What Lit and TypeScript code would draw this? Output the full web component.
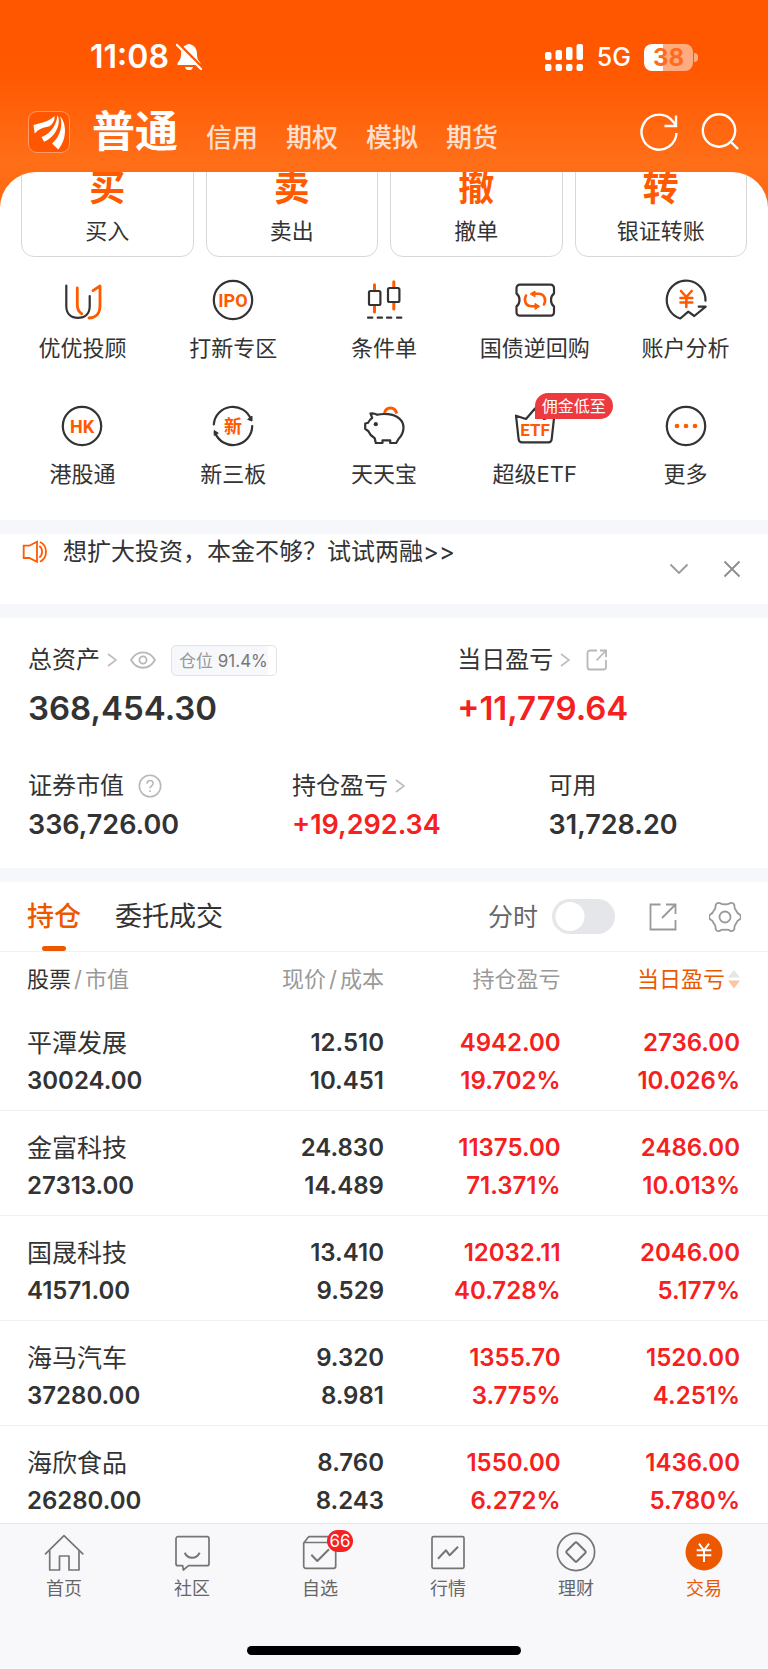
import { LitElement, html, svg, css, nothing, TemplateResult } from "lit";
import { customElement, property, state } from "lit/decorators.js";
import { classMap } from "lit/directives/class-map.js";

const DARK = "#333333";
const ORANGE = "#ff5a00";

type Glyph = TemplateResult;

const serviceIcons: Record<string, Glyph> = {
  advisor: svg`
    <path d="M6.3 7.7V28c0 8 5 11.8 11.7 11.8S29.7 36 29.7 28V18" stroke=${DARK} />
    <path d="M17.3 10V27c0 4 1.700 7 4.400 8.700" stroke=${ORANGE} stroke-width="2.800" />
    <path d="M33 12.700 40 8V28c0 7.500-4.500 11.800-11 12" stroke=${ORANGE} stroke-width="2.800" />`,
  ipo: svg`
    <circle cx="22" cy="22" r="19.200" stroke=${DARK} />
    <text x="22" y="28.500" class="word">IPO</text>`,
  candles: svg`
    <path d="M12.500 6.700v6M12.500 28v6M31.800 3.700v6M31.800 25v6" stroke=${ORANGE} stroke-width="3" />
    <rect x="7" y="13" width="11.400" height="14" rx="1.500" stroke=${DARK} />
    <rect x="26" y="10" width="11.400" height="14" rx="1.500" stroke=${DARK} />
    <path d="M6 39.700h4.300M15.700 39.700h4.300M25 39.700h4.300M35 39.700h4.300" stroke=${DARK} />`,
  repo: svg`
    <path d="M7 6.700H37.500A3.300 3.300 0 0 1 41 10V15.500C37 18.500 37 25.500 41 28.500V34.500A3.300 3.300 0 0 1 37.500 37.700H7A3.300 3.300 0 0 1 3.500 34.500V28.500C7.500 25.500 7.500 18.500 3.500 15.500V10A3.300 3.300 0 0 1 7 6.700Z" stroke=${DARK} />
    <path d="M20 15.800h5.500c6 0 8 6 5.500 10.700M24 28.200h-5.500c-6 0-8-6-5.500-10.700" stroke=${ORANGE} stroke-width="2.600" />
    <path d="M17.500 15.800 22 13v5.600ZM26.500 28.200 22 25.400v5.600Z" fill=${ORANGE} stroke=${ORANGE} stroke-width="1" />`,
  analysis: svg`
    <path d="M41.500 22.700A19.400 19.400 0 1 0 16.300 40.500L24.300 33.700 30.300 38 41.700 28.700H34.700" stroke=${DARK} />
    <path d="M17 13 22.300 19 27.700 13M22.300 19V29M16.500 20h11.800M16.500 24.500h11.800" stroke=${ORANGE} stroke-width="2.600" />`,
  hk: svg`
    <circle cx="22" cy="22" r="19.200" stroke=${DARK} />
    <text x="22" y="28.500" class="word">HK</text>`,
  neeq: svg`
    <path d="M2.800 20.500A19.200 19.200 0 0 1 40 15.500M41.200 22A19.200 19.200 0 0 1 4 28.500" stroke=${DARK} />
    <path d="M41 12.500V17L37 15.500ZM3.200 31V26.500L7 29Z" fill=${DARK} stroke=${DARK} stroke-width="1" />
    <text x="22" y="28.500" class="han">新</text>`,
  piggy: svg`
    <path d="M15.200 10.800C19 9.800 22 9.800 26 10.200 35 11 41.500 16 41.500 23.500 41.500 29 38.500 33 36.500 35L34.200 39H28.200V36.300H20.500V39H13.800L12.700 34.300C9.500 32.500 7.500 30 6.200 27L3.200 24.800V19.500L6.200 18.700C7 16.700 8.500 15 10.200 13.800L8.500 9.500C11 9.200 13.500 9.800 15.200 10.800Z" stroke=${DARK} />
    <circle cx="13.800" cy="20.200" r="2.100" fill=${DARK} />
    <path d="M22.500 9C24.200 2.200 32.800 2 34.800 9.500" stroke=${ORANGE} stroke-width="3" stroke-linecap="butt" />`,
  etf: svg`
    <path d="M3 11.700 13 15 22 4.500 31 15 41.300 11.700 38.700 35C38.500 37.500 37.300 38.400 35.500 38.400H9C7 38.400 5.800 37.300 5.600 35Z" stroke=${DARK} />
    <text x="22" y="32" class="word small">ETF</text>`,
  more: svg`
    <circle cx="22" cy="22" r="19.200" stroke=${DARK} />
    <circle cx="13" cy="22" r="2.300" fill=${ORANGE} />
    <circle cx="22" cy="22" r="2.300" fill=${ORANGE} />
    <circle cx="31" cy="22" r="2.300" fill=${ORANGE} />`,
};

const dockIcons: Record<string, Glyph> = {
  home: svg`<path d="M1 22.300 20 3.700 39.300 22.300M5.700 18.500V38H15.500V24H25V38H35V18.500" />`,
  community: svg`
    <path d="M6 4.700H35A2 2 0 0 1 37 6.700V31.700A2 2 0 0 1 35 33.700H16.500L11.300 38 10.700 33.700H6A2 2 0 0 1 4 31.700V6.700A2 2 0 0 1 6 4.700Z" />
    <path d="M12.700 20.800C16 27.500 24 27.500 27.700 20.800" stroke-width="2" />`,
  watch: svg`
    <path d="M3.700 11 8.700 4.700H32L35.700 11V34.300A2 2 0 0 1 33.700 36.300H5.700A2 2 0 0 1 3.700 34.300ZM3.700 10.500H35.700" />
    <path d="M11.300 22.700 17.300 29 29 17.300" stroke-width="2" />`,
  market: svg`
    <rect x="4" y="4.700" width="32" height="31.600" rx="1.500" />
    <path d="M10 26.700 18 18.300 21.700 23.300 30 14.700" stroke-width="2" />`,
  wealth: svg`
    <circle cx="20" cy="20" r="18.600" />
    <path d="M19 10.700Q20 9.700 21 10.700L29.300 19Q30.300 20 29.300 21L21 29.300Q20 30.300 19 29.300L10.700 21Q9.700 20 10.700 19Z" stroke-width="2" />`,
  trade: svg`
    <circle cx="20" cy="20" r="18.500" fill="#ec5800" stroke="none" />
    <path d="M15 11.700 20 18.300 25 11.700M20 18.300V30M12.700 18.300H27.300M12.700 23.300H27.300" stroke="#ffffff" stroke-width="2" />`,
};

// Six-lobed outline: every lobe has a blunt, rounded tip with a shallow dip between neighbours.
const polar = (deg: number, r: number) => {
  const a = (deg * Math.PI) / 180;
  return `${(16 + r * Math.cos(a)).toFixed(2)} ${(16 + r * Math.sin(a)).toFixed(2)}`;
};
const gearPath =
  `M${polar(-9, 15)}` +
  [0, 60, 120, 180, 240, 300]
    .map((d) => `Q${polar(d - 6, 15.8)} ${polar(d, 15.8)}Q${polar(d + 6, 15.8)} ${polar(d + 9, 15)}Q${polar(d + 16, 12.6)} ${polar(d + 30, 12.9)}Q${polar(d + 44, 12.6)} ${polar(d + 51, 15)}`)
    .join("") +
  "Z";

const chevron = html`<svg class="chevron" width="10" height="14" viewBox="0 0 10 14" aria-hidden="true">
  <path d="M1 1 9 7 1 13" fill="none" stroke="#bdbdbd" stroke-width="1.600" />
</svg>`;

@customElement("status-bar")
class StatusBar extends LitElement {
  static styles = css`
    :host { display: flex; align-items: center; height: 34px; padding: 40px 70px 18px 90px; color: #fff;
      font-family: Inter, "Noto Sans CJK SC", sans-serif; }
    .time { font-size: 32px; line-height: 34px; font-weight: 600; }
    .bell { margin-left: 7px; }
    .right { display: flex; align-items: center; gap: 13px; margin-left: auto; }
    .net { font-size: 25px; line-height: 34px; font-weight: 500; }
    .battery { display: flex; align-items: center; gap: 1px; }
    .cell { width: 49px; height: 27px; border-radius: 8px; text-align: center;
      background: linear-gradient(90deg, #fff 38%, #ffab80 38%);
      color: #ff6a1c; font-size: 24px; line-height: 27px; font-weight: 700; }
    .tip { width: 4px; height: 9px; border-radius: 0 4px 4px 0; background: #ffab80; }
  `;
  render() {
    return html`
      <span class="time">11:08</span>
      <svg class="bell" width="26" height="28" viewBox="0 0 26 28" aria-label="静音">
        <path d="M13 1C18.500 2 21 6 21 11C21 16 22.500 17.500 24.500 20V22H1.500V20C3.500 17.500 5 16 5 11C5 6 7.500 2 13 1ZM9 24H17C16.500 26.500 15 27 13 27S9.500 26.500 9 24Z" fill="#fff" />
        <path d="M2 0 26 24" stroke="#ff5600" stroke-width="2.600" />
        <path d="M1 2 25 26" stroke="#fff" stroke-width="2.400" stroke-linecap="round" />
      </svg>
      <div class="right">
        <svg width="39" height="27" viewBox="0 0 39 27" fill="#fff" aria-label="信号">
          ${[[0, 8], [10.5, 6], [21, 3], [31.5, 0]].map(
            ([x, y]) => svg`<rect x=${x} y=${y} width="6.500" height=${16 - y} rx="2" />
              <rect x=${x} y="20" width="6.500" height="7" rx="2" />`,
          )}
        </svg>
        <span class="net">5G</span>
        <div class="battery"><div class="cell">38</div><div class="tip"></div></div>
      </div>`;
  }
}

@customElement("account-nav")
class AccountNav extends LitElement {
  static styles = css`
    :host { display: flex; align-items: center; height: 80px; padding: 0 29px 0 28px; color: #fff;
      font-family: Inter, "Noto Sans CJK SC", sans-serif; }
    nav { display: flex; align-items: baseline; gap: 28px; margin-left: 22px; padding-top: 4px; }
    a { color: #ffe0cf; text-decoration: none; font-size: 26px; line-height: 52px; font-weight: 500; }
    .current { color: #fff; font-size: 43px; font-weight: 700; }
    .tools { display: flex; gap: 20px; margin-left: auto; }
    button { display: block; width: 40px; height: 40px; padding: 0; border: 0; background: none; }
    svg { display: block; }
  `;
  render() {
    return html`
      <svg width="42" height="42" viewBox="0 0 42 42" aria-label="东方财富">
        <rect x="0.500" y="0.500" width="41" height="41" rx="8.500" fill="#ff5600" stroke="#ff9a66" />
        <g fill="#fff">
          <path d="M5.500 14C13 12 20 11 26.500 5C27 9 25 13 21.500 15.300C16 16.500 10.500 18 6.700 22.500Z" />
          <path d="M29.500 4.300C34 12 27 27 16 30.800L13.500 26C20 24 28 17 29.500 4.300Z" />
          <path d="M32 5.300C38 11 40 27 30.300 38.500L24 32.500C32 26 35.500 14 32 5.300Z" />
        </g>
      </svg>
      <nav>
        <a class="current" href="#normal">普通</a>
        <a href="#credit">信用</a><a href="#options">期权</a><a href="#paper">模拟</a><a href="#futures">期货</a>
      </nav>
      <div class="tools">
        <button aria-label="刷新"><svg width="40" height="40" viewBox="0 0 40 40" fill="none" stroke="#fff" stroke-width="2.400">
          <path d="M37.500 21A17.500 17.500 0 1 1 34 9.600L37 13M37 3.500V14H25.500" /></svg></button>
        <button aria-label="搜索"><svg width="40" height="40" viewBox="0 0 40 40" fill="none" stroke="#fff" stroke-width="2.400">
          <circle cx="20" cy="18.500" r="16.200" /><path d="M31.500 29.500 39 37" /></svg></button>
      </div>`;
  }
}

@customElement("service-item")
class ServiceItem extends LitElement {
  @property() icon = "";
  @property() label = "";
  @property() tag = "";
  static styles = css`
    :host { display: block; font-family: Inter, "Noto Sans CJK SC", sans-serif; }
    a { position: relative; display: flex; flex-direction: column; align-items: center; gap: 12px;
      color: #333; text-decoration: none; font-size: 22px; line-height: 28px; white-space: nowrap; }
    svg { display: block; }
    .word { fill: #ff5a00; stroke: none; font: 700 18px Roboto, sans-serif; text-anchor: middle; }
    .small { font-size: 17px; }
    .han { fill: #ff5a00; stroke: none; font: 700 18px "Noto Sans CJK SC", sans-serif; text-anchor: middle; }
    .tag { position: absolute; left: 50%; top: -11px; padding: 0 7px; border-radius: 13px 13px 13px 0;
      background: #ec3a3e; color: #fff; font-size: 16px; line-height: 26px; }
  `;
  render() {
    return html`<a href="#${this.icon}">
      <svg width="44" height="44" viewBox="0 0 44 44" fill="none" stroke-width="2.200" stroke-linecap="round" stroke-linejoin="round" aria-hidden="true">
        ${serviceIcons[this.icon]}
      </svg>
      <span>${this.label}</span>
      ${this.tag ? html`<span class="tag">${this.tag}</span>` : nothing}
    </a>`;
  }
}

@customElement("asset-summary")
class AssetSummary extends LitElement {
  static styles = css`
    :host { display: block; padding: 26px 0 27px 28px; color: #333;
      font-family: Inter, "Noto Sans CJK SC", sans-serif; }
    .top, .bottom { display: grid; }
    .top { grid-template-columns: 58fr 42fr; row-gap: 12px; }
    .bottom { grid-template-columns: 71fr 69fr 59fr; margin-top: 42px; }
    .label { display: flex; align-items: center; height: 32px; font-size: 24px; line-height: 32px; }
    .chevron { margin-left: 7px; }
    .total { margin-top: 12px; font-size: 33px; line-height: 40px; font-weight: 600; }
    .value { margin-top: 7px; font-size: 27px; line-height: 32px; font-weight: 600; }
    .up { color: #f62020; }
    button { display: block; padding: 0; border: 0; background: none; }
    svg { display: block; }
    .eye { margin-left: 13px; }
    .share { margin-left: 16px; }
    .help { margin-left: 14px; }
    .ratio { box-sizing: border-box; height: 31px; margin-left: 15px; padding: 0 8px 0 7px; border: 1px solid #e2e3e7;
      border-radius: 5px; background: linear-gradient(#f7f8fb, #f7f8fb) 0 0 / calc(100% - 8px) 100% no-repeat;
      color: #999; font-size: 17px; line-height: 30px; }
    .ratio b { font-weight: 400; color: #777; }
  `;
  render() {
    return html`
      <div class="top">
        <div>
          <div class="label">总资产${chevron}
            <button class="eye" aria-label="隐藏金额"><svg width="26" height="18" viewBox="0 0 26 18" fill="none" stroke="#b8b8b8" stroke-width="1.800">
              <path d="M1 9C7-1.300 19-1.300 25 9 19 19.300 7 19.300 1 9Z" /><circle cx="13" cy="9" r="3.600" /></svg></button>
            <span class="ratio">仓位 <b>91.4%</b></span>
          </div>
          <div class="total">368,454.30</div>
        </div>
        <div>
          <div class="label">当日盈亏${chevron}
            <button class="share" aria-label="分享"><svg width="22" height="22" viewBox="0 0 22 22" fill="none" stroke="#b8b8b8" stroke-width="1.800">
              <path d="M11 1.500H4A2.500 2.500 0 0 0 1.500 4V18A2.500 2.500 0 0 0 4 20.500H17.500A2.500 2.500 0 0 0 20 18V11M14 1.500H20V8M20 1.500 10.500 11.500" /></svg></button>
          </div>
          <div class="total up">+11,779.64</div>
        </div>
      </div>
      <div class="bottom">
        <div>
          <div class="label">证券市值
            <button class="help" aria-label="说明"><svg width="24" height="24" viewBox="0 0 24 24" fill="none" stroke="#b8b8b8" stroke-width="1.600">
              <circle cx="12" cy="12" r="10.700" /><path d="M9 9.800C9 5.300 15.200 5.500 15.200 9.300 15.200 11.800 12 11.800 12 14.500M12 16.200V18" /></svg></button>
          </div>
          <div class="value">336,726.00</div>
        </div>
        <div>
          <div class="label">持仓盈亏${chevron}</div>
          <div class="value up">+19,292.34</div>
        </div>
        <div>
          <div class="label">可用</div>
          <div class="value">31,728.20</div>
        </div>
      </div>`;
  }
}

const holdings = [
  ["平潭发展", "30024.00", "12.510", "10.451", "4942.00", "19.702%", "2736.00", "10.026%"],
  ["金富科技", "27313.00", "24.830", "14.489", "11375.00", "71.371%", "2486.00", "10.013%"],
  ["国晟科技", "41571.00", "13.410", "9.529", "12032.11", "40.728%", "2046.00", "5.177%"],
  ["海马汽车", "37280.00", "9.320", "8.981", "1355.70", "3.775%", "1520.00", "4.251%"],
  ["海欣食品", "26280.00", "8.760", "8.243", "1550.00", "6.272%", "1436.00", "5.780%"],
];

@customElement("holdings-panel")
class HoldingsPanel extends LitElement {
  @state() private intraday = false;
  static styles = css`
    :host { display: block; color: #333; font-family: Inter, "Noto Sans CJK SC", sans-serif; }
    .bar { display: flex; align-items: center; box-sizing: border-box; height: 70px; padding: 0 27px;
      border-bottom: 1px solid #f0f0f2; }
    button { display: block; padding: 0; border: 0; background: none; color: inherit; font: inherit; }
    .tab { position: relative; height: 69px; margin-right: 34px; font-size: 27px; line-height: 69px; }
    .active { color: #ec5800; font-weight: 500; }
    .active::after { content: ""; position: absolute; left: 50%; bottom: 0; width: 24px; height: 5px;
      margin-left: -12px; border-radius: 3px; background: #ec5800; }
    .switch { display: flex; align-items: center; gap: 14px; margin-left: auto; color: #666; font-size: 25px; line-height: 36px; }
    input { appearance: none; width: 63px; height: 35px; margin: 0; border-radius: 18px;
      background: radial-gradient(circle at 18px 50%, #fff 14px, #e4e6e9 15px); }
    input:checked { background: radial-gradient(circle at 45px 50%, #fff 14px, #ec5800 15px); }
    .share { margin-left: 34px; }
    .gear { margin-left: 32px; }
    svg { display: block; }
    table { width: 100%; table-layout: fixed; border-collapse: separate; border-spacing: 0; }
    th, td { box-sizing: border-box; padding: 0; text-align: right; white-space: nowrap; }
    th { height: 54px; font-size: 22px; line-height: 28px; font-weight: 400; color: #999; }
    td { height: 105px; padding-top: 7px; border-bottom: 1px solid #f0f0f2; font-size: 24px; line-height: 38px;
      font-weight: 600; }
    th:first-child, td:first-child { padding-left: 27px; text-align: left; }
    th:last-child, td:last-child { padding-right: 28px; }
    .c1, .c4 { width: 27%; }
    .c2, .c3 { width: 23%; }
    th b { color: #333; font-weight: 400; }
    .slash { margin: 0 3px; }
    .sorted { color: #ec5800; }
    .sort { display: inline-block; vertical-align: -2px; margin-left: 3px; }
    td span { display: block; }
    .name { font-size: 25px; font-weight: 400; }
    .up { color: #f62020; }
  `;
  render() {
    return html`
      <div class="bar">
        <button class="tab active">持仓</button>
        <button class="tab">委托成交</button>
        <label class="switch">分时
          <input type="checkbox" role="switch" .checked=${this.intraday}
            @change=${(e: Event) => (this.intraday = (e.target as HTMLInputElement).checked)} />
        </label>
        <button class="share" aria-label="分享"><svg width="28" height="28" viewBox="0 0 28 28" fill="none" stroke="#999" stroke-width="1.800">
          <path d="M11.500 1.500H1.500V26.500H26.500V17M17 1.500H26.500V11M26.500 1.500 13 15" /></svg></button>
        <button class="gear" aria-label="设置"><svg width="32" height="32" viewBox="0 0 32 32" fill="none" stroke="#999" stroke-width="1.800" stroke-linejoin="round">
          <path d=${gearPath} /><circle cx="16" cy="16" r="5.500" /></svg></button>
      </div>
      <table>
        <thead>
          <tr>
            <th class="c1" scope="col"><b>股票</b><span class="slash">/</span>市值</th>
            <th class="c2" scope="col">现价<span class="slash">/</span>成本</th>
            <th class="c3" scope="col">持仓盈亏</th>
            <th class="c4 sorted" scope="col">当日盈亏<svg class="sort" width="12" height="19" viewBox="0 0 12 19" aria-hidden="true">
              <path d="M6 0 12 7.500H0Z" fill="#e6e6e8" /><path d="M0 10.500H12L6 18.500Z" fill="#ffc4a3" /></svg></th>
          </tr>
        </thead>
        <tbody>
          ${holdings.map(
            ([name, value, price, cost, gain, gainPct, day, dayPct]) => html`<tr>
              <td><span class="name">${name}</span><span>${value}</span></td>
              <td><span>${price}</span><span>${cost}</span></td>
              <td class="up"><span>${gain}</span><span>${gainPct}</span></td>
              <td class="up"><span>${day}</span><span>${dayPct}</span></td>
            </tr>`,
          )}
        </tbody>
      </table>`;
  }
}

@customElement("bottom-dock")
class BottomDock extends LitElement {
  static styles = css`
    :host { display: block; background: #f8f8fb; border-top: 1px solid #e9e9ec;
      font-family: Inter, "Noto Sans CJK SC", sans-serif; }
    nav { display: grid; grid-template-columns: repeat(6, 1fr); padding-top: 8px; }
    a { display: flex; flex-direction: column; align-items: center; gap: 5px; color: #666; text-decoration: none;
      font-size: 18px; line-height: 24px; }
    .current { color: #ec5800; }
    .icon { position: relative; }
    svg { display: block; }
    .count { position: absolute; left: 27px; top: -2px; min-width: 26px; border-radius: 11px; background: #f62020;
      color: #fff; font-size: 17px; line-height: 22px; text-align: center; }
    .grip { width: 274px; height: 9px; margin: 45px auto 14px; border-radius: 5px; background: #000; }
  `;
  render() {
    const items = [
      { id: "home", label: "首页" },
      { id: "community", label: "社区" },
      { id: "watch", label: "自选", count: 66 },
      { id: "market", label: "行情" },
      { id: "wealth", label: "理财" },
      { id: "trade", label: "交易" },
    ];
    return html`
      <nav>
        ${items.map(
          (it) => html`<a href="#${it.id}" class=${classMap({ current: it.id === "trade" })}>
            <span class="icon">
              <svg width="40" height="40" viewBox="0 0 40 40" fill="none" stroke="#757575" stroke-width="1.700" stroke-linejoin="round" aria-hidden="true">
                ${dockIcons[it.id]}
              </svg>
              ${it.count ? html`<span class="count">${it.count}</span>` : nothing}
            </span>
            <span>${it.label}</span>
          </a>`,
        )}
      </nav>
      <div class="grip"></div>`;
  }
}

@customElement("app-root")
class AppRoot extends LitElement {
  static styles = css`
    :host { display: flex; flex-direction: column; height: 100vh; color: #333;
      background: linear-gradient(#ff5600 0, #ff5800 70px, #ff6e18 160px, #ff6810 210px);
      font-family: Inter, "Noto Sans CJK SC", sans-serif; }
    main { flex: 1; min-height: 0; overflow-y: auto; scrollbar-width: none; background: #fff;
      border-radius: 36px 36px 0 0; }
    .actions { display: grid; grid-template-columns: repeat(4, 1fr); gap: 12px; margin-top: -20px; padding: 0 21px; }
    .action { display: flex; flex-direction: column; align-items: center; gap: 8px; padding: 13px 0 12px;
      border: 1px solid #d8d8d8; border-radius: 13px; background: #fff; color: #333; font: inherit;
      font-size: 22px; line-height: 26px; }
    .mark { color: #ff5a00; font-size: 36px; line-height: 44px; font-weight: 700; }
    .services { display: grid; grid-template-columns: repeat(5, 1fr); row-gap: 42px; padding: 21px 7px 32px; }
    .gap { height: 14px; background: #f6f7fa; }
    .notice { display: flex; align-items: center; height: 70px; padding: 0 27px 0 22px; }
    .notice a { display: flex; align-items: center; align-self: flex-start; gap: 15px; margin-right: auto;
      color: #333; text-decoration: none; font-size: 24px; line-height: 36px; }
    .notice button { display: block; padding: 0; border: 0; background: none; }
    .close { margin-left: 34px; }
    svg { display: block; }
  `;
  render() {
    return html`
      <status-bar></status-bar>
      <account-nav></account-nav>
      <main>
        <div class="actions">
          ${[["买", "买入"], ["卖", "卖出"], ["撤", "撤单"], ["转", "银证转账"]].map(
            ([mark, label]) => html`<button class="action"><span class="mark">${mark}</span><span>${label}</span></button>`,
          )}
        </div>
        <div class="services">
          <service-item icon="advisor" label="优优投顾"></service-item>
          <service-item icon="ipo" label="打新专区"></service-item>
          <service-item icon="candles" label="条件单"></service-item>
          <service-item icon="repo" label="国债逆回购"></service-item>
          <service-item icon="analysis" label="账户分析"></service-item>
          <service-item icon="hk" label="港股通"></service-item>
          <service-item icon="neeq" label="新三板"></service-item>
          <service-item icon="piggy" label="天天宝"></service-item>
          <service-item icon="etf" label="超级ETF" tag="佣金低至"></service-item>
          <service-item icon="more" label="更多"></service-item>
        </div>
        <div class="gap"></div>
        <div class="notice">
          <a href="#margin">
            <svg width="26" height="24" viewBox="0 0 26 24" fill="none" stroke="#ff5a00" stroke-width="1.800" aria-hidden="true">
              <path d="M1.700 5.700H7.300L15 1.700V21.700L7.300 18H1.700ZM17.300 6C21 8.500 21 15 17.300 17.500M18 2C26 5.500 26 18 18 21.700" />
            </svg>
            <span>想扩大投资，本金不够？试试两融&gt;&gt;</span>
          </a>
          <button aria-label="展开"><svg width="20" height="12" viewBox="0 0 20 12" fill="none" stroke="#999" stroke-width="1.800"><path d="M1.500 1.500 10 10 18.500 1.500" /></svg></button>
          <button class="close" aria-label="关闭"><svg width="18" height="18" viewBox="0 0 18 18" fill="none" stroke="#8c8c8c" stroke-width="1.800"><path d="M1.500 1.500 16.500 16.500M16.500 1.500 1.500 16.500" /></svg></button>
        </div>
        <div class="gap"></div>
        <asset-summary></asset-summary>
        <div class="gap"></div>
        <holdings-panel></holdings-panel>
      </main>
      <bottom-dock></bottom-dock>`;
  }
}
